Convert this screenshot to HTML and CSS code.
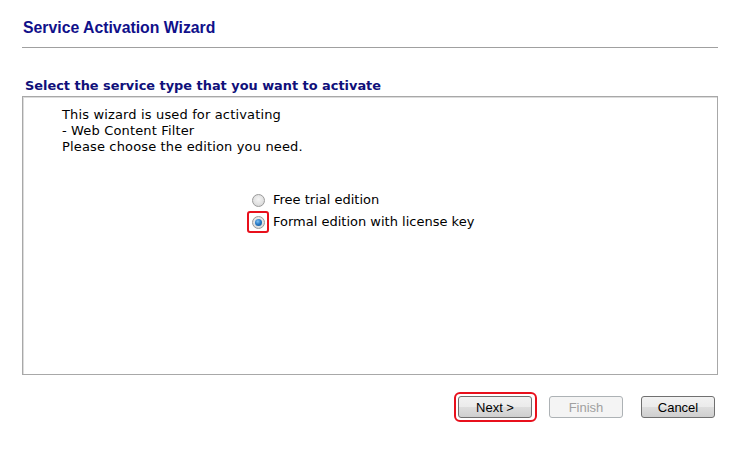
FILE: index.html
```html
<!DOCTYPE html>
<html>
<head>
<meta charset="utf-8">
<link rel="stylesheet" href="styles.css">
</head>
<body>
<div class="page">
  <h1 class="title">Service Activation Wizard</h1>
  <div class="rule"></div>
  <h2 class="section">Select the service type that you want to activate</h2>
  <div class="panel">
    <div class="intro">
      <div>This wizard is used for activating</div>
      <div>- Web Content Filter</div>
      <div>Please choose the edition you need.</div>
    </div>
    <div class="options">
      <label class="opt"><span class="radio-wrap"><input type="radio" name="ed" class="radio"></span>Free trial edition</label>
      <label class="opt"><span class="radio-wrap hl"><input type="radio" name="ed" class="radio" checked></span>Formal edition with license key</label>
    </div>
  </div>
  <div class="buttons">
    <span class="btn-hl"><button class="btn">Next &gt;</button></span>
    <button class="btn" disabled>Finish</button>
    <button class="btn cancel">Cancel</button>
  </div>
</div>
</body>
</html>
```
FILE: styles.css
```css
html, body { margin: 0; padding: 0; background: #fff; }
.page { width: 696px; margin-left: 22px; padding-top: 18px; padding-bottom: 30px; }
.title {
  margin: 0 0 0 1px;
  font-family: "Liberation Sans", Arial, sans-serif;
  font-weight: bold;
  font-size: 15.8px;
  line-height: 20px;
  color: #10108a;
}
.rule { height: 1px; background: #a0a0a0; margin-top: 9px; }
.section {
  margin: 29px 0 0 3px;
  font-family: "DejaVu Sans", Verdana, sans-serif;
  font-weight: bold;
  font-size: 12.9px;
  line-height: 18px;
  color: #10107a;
}
.panel {
  margin-top: 1px;
  height: 277px;
  border: 1px solid #a8a8a8;
  box-shadow: inset 1px 1px 0 #dcdcdc;
  font-family: "DejaVu Sans", Verdana, sans-serif;
  font-size: 13px;
  color: #000;
}
.intro { padding: 10px 0 0 39px; line-height: 16px; letter-spacing: 0.15px; }
.options { padding: 36px 0 0 226px; display: flex; flex-direction: column; gap: 4px; }
.opt { display: flex; align-items: center; height: 18px; line-height: 18px; }
.radio-wrap {
  width: 18px; height: 18px; display: flex; align-items: center; justify-content: center;
  margin-right: 6px; box-sizing: border-box;
}
.radio-wrap.hl { border: 2px solid #e8101c; border-radius: 3px; width: 22px; height: 22px; margin-left: -2px; margin-right: 4px; }
.radio {
  appearance: none; -webkit-appearance: none; margin: 0;
  width: 13px; height: 13px; border-radius: 50%;
  border: 1px solid #9a9a9a; box-sizing: border-box;
  background: radial-gradient(circle at 50% 40%, #f4f4f4 0%, #e0e0e0 60%, #cfcfcf 100%);
  position: relative;
}
.radio:checked::after {
  content: ""; position: absolute; left: 2px; top: 2px; width: 7px; height: 7px; border-radius: 50%;
  background: radial-gradient(circle at 40% 35%, #7ec0f0 0%, #2a7cc8 45%, #0d4d8a 100%);
}
.buttons {
  display: flex; justify-content: flex-end; align-items: center; gap: 17px;
  margin-top: 21px; padding-right: 3px;
}
.btn-hl {
  display: flex; padding: 2px 3px 2px 2px; margin: -4px -5px -4px -4px;
  border: 2px solid #e8101c; border-radius: 6px;
}
.cancel { margin-left: 1px; }
.btn {
  width: 74px; height: 22px;
  font-family: "Liberation Sans", Arial, sans-serif; font-size: 13px;
  color: #000;
  border: 1px solid #707070; border-radius: 3px;
  background: linear-gradient(#f2f2f2 0%, #ebebeb 50%, #dddddd 51%, #cfcfcf 100%);
  padding: 0;
}
.btn:disabled { color: #a0a0a0; border-color: #adb2b5; background: #f4f4f4; }
```
